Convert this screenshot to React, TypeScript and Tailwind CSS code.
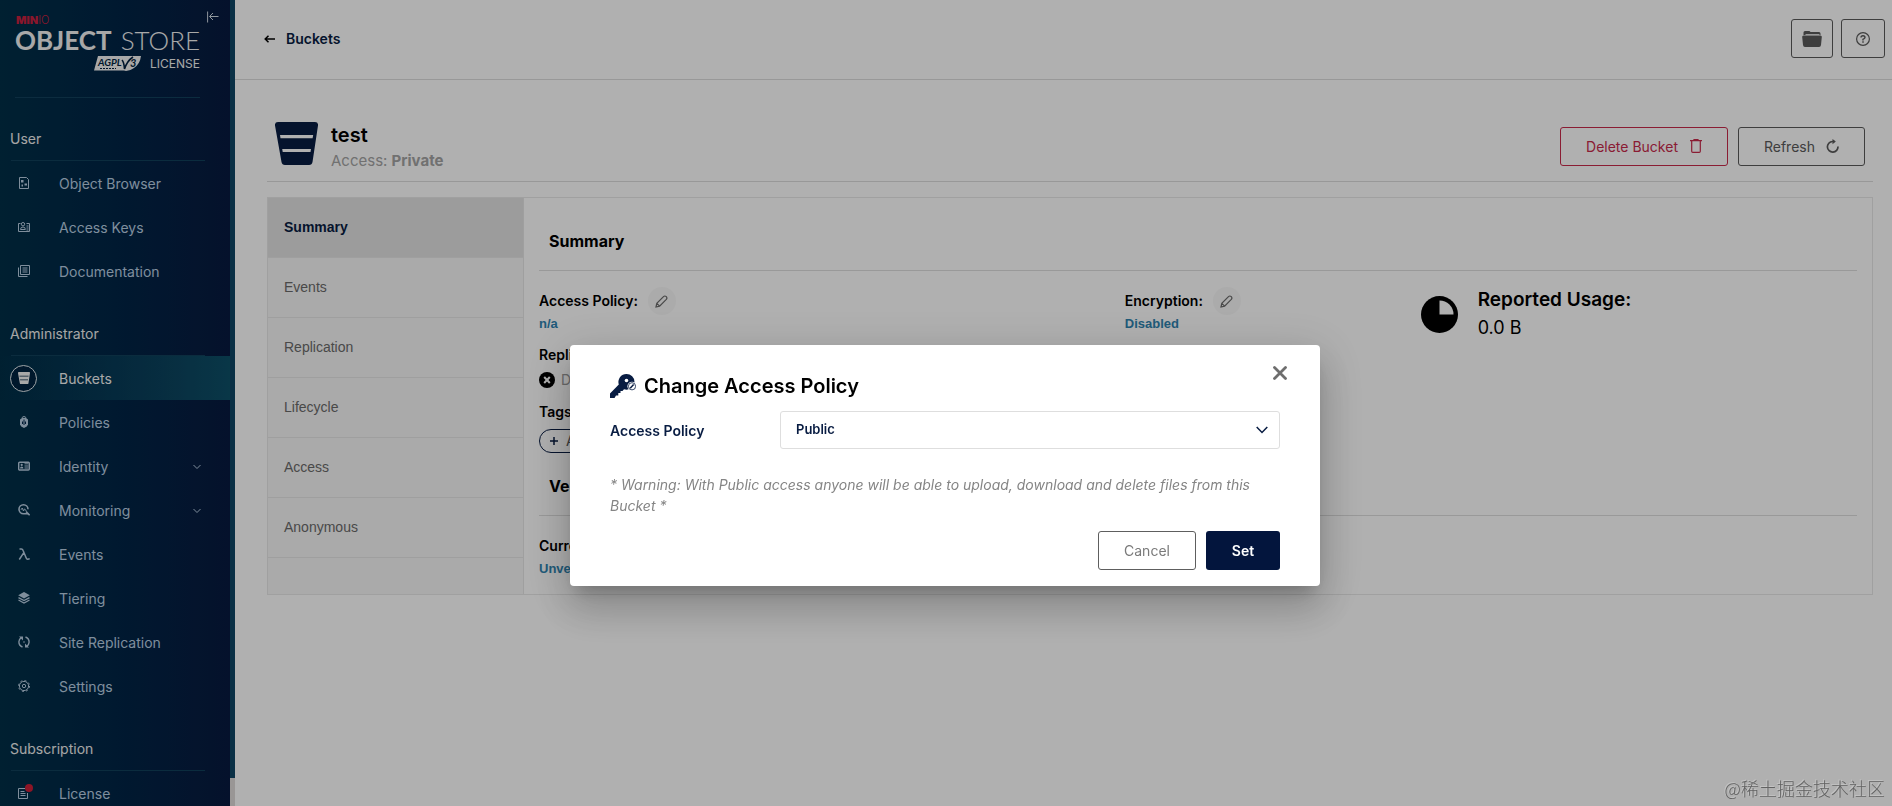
import type { ReactNode } from 'react';
import clsx from 'clsx';

interface NavItem {
  label: string;
  icon: ReactNode;
  active?: boolean;
  expandable?: boolean;
  badge?: boolean;
}

interface NavGroup {
  title: string;
  items: NavItem[];
}

const Glyph = ({ children }: { children: ReactNode }) => (
  <svg viewBox="0 0 12 12" className="size-3" fill="none" stroke="currentColor" aria-hidden="true">
    {children}
  </svg>
);

const BucketGlyph = () => (
  <svg viewBox="0 0 43 43" className="size-full" fill="currentColor" aria-hidden="true">
    <path
      fillRule="evenodd"
      d="M3 0H40Q43.400 0 43 3.500L37.500 40Q37 43 34 43H10Q7 43 6.500 40L0 3.500Q-.4 0 3 0ZM5 13L5.500 16.300H37.600L38.200 13ZM7.200 27L7.700 30H35.500L36 27Z"
    />
  </svg>
);

const NAV: NavGroup[] = [
  {
    title: 'User',
    items: [
      {
        label: 'Object Browser',
        icon: (
          <Glyph>
            <path d="M1.500 .5H8.500L10.500 2.500V11.500H1.500Z" />
            <path d="M3 3h2.500v2.500H3zM3.500 7.500h1.500v2H3.500zM6.500 6.500h2.500v2H6.500z" fill="currentColor" stroke="none" />
          </Glyph>
        ),
      },
      {
        label: 'Access Keys',
        icon: (
          <Glyph>
            <path d="M2.500 2.500H.5V10.500H11.500V2.500H8.500" />
            <circle cx="5" cy="3.200" r="1.700" />
            <path d="M2.500 8.500Q2.500 6 5 6T7.300 8.500ZM8.500 5h2M8.500 7h2M8.500 9h2" />
          </Glyph>
        ),
      },
      {
        label: 'Documentation',
        icon: (
          <Glyph>
            <path d="M2.500 .5H11.500V9.500H2.500ZM.5 2.500V11.500H9.500M4.500 3h5M4.500 5h5M4.500 7h5" />
          </Glyph>
        ),
      },
    ],
  },
  {
    title: 'Administrator',
    items: [
      { label: 'Buckets', active: true, icon: <BucketGlyph /> },
      {
        label: 'Policies',
        icon: (
          <Glyph>
            <path d="M4.200 2.200V1.800Q4.200 .6 6 .6T7.800 1.800V2.200" />
            <path d="M2 3.500L4 2H8L10 3.500V8.500Q9.500 10.500 6 12Q2.500 10.500 2 8.500Z" fill="currentColor" stroke="none" />
            <path d="M6 3.500V9M4.500 5.500V8M7.500 5.500V8" stroke="#00264a" />
          </Glyph>
        ),
      },
      {
        label: 'Identity',
        expandable: true,
        icon: (
          <Glyph>
            <rect x=".7" y="2.200" width="10.600" height="7.800" rx="1" strokeWidth="1.400" />
            <path d="M2 8.500Q2 6.500 3.700 6.500T5.400 8.500Z" fill="currentColor" stroke="none" />
            <circle cx="3.700" cy="4.900" r="1.100" fill="currentColor" stroke="none" />
            <path d="M6.500 3.800h4M6.500 6h4M6.500 8h4" />
          </Glyph>
        ),
      },
      {
        label: 'Monitoring',
        expandable: true,
        icon: (
          <Glyph>
            <path d="M10 5.300A4.500 4.500 0 1 0 5.500 9.800H10.500" strokeWidth="1.600" />
            <path d="M8 7.500L11.600 11.300" strokeWidth="1.600" />
            <path d="M3 5.800L4.200 4L5.500 7L6.500 4.800L8.500 7.200" strokeWidth="1" />
          </Glyph>
        ),
      },
      {
        label: 'Events',
        icon: (
          <Glyph>
            <path d="M1.500 1H3.500Q4.500 1 5 2.300L8.200 10Q8.700 11.300 9.700 11.200L11.700 10.800M5.800 4.700L1.300 11.500" strokeWidth="1.500" />
          </Glyph>
        ),
      },
      {
        label: 'Tiering',
        icon: (
          <Glyph>
            <path d="M6 0L11.800 3.200L6 6.400L.2 3.200Z" fill="currentColor" stroke="none" />
            <path d="M.5 5.600L6 8.600L11.500 5.600M.5 8L6 11L11.500 8" strokeWidth="1.300" />
          </Glyph>
        ),
      },
      {
        label: 'Site Replication',
        icon: (
          <Glyph>
            <path d="M4.500 11Q.8 9.500 .9 5.700Q1 3.200 3.300 1.600M7.500 1Q11.200 2.500 11.100 6.300Q11 8.800 8.700 10.400" strokeWidth="1.400" />
            <path d="M1 .5H5V4.500ZM11 11.500H7V7.500Z" fill="currentColor" stroke="none" />
            <circle cx="6" cy="6" r=".8" fill="currentColor" stroke="none" />
          </Glyph>
        ),
      },
      {
        label: 'Settings',
        icon: (
          <Glyph>
            <circle cx="6" cy="6" r="4.600" />
            <circle cx="6" cy="6" r="1.700" />
            <circle cx="6" cy="6" r="5.500" strokeDasharray="2 2.300" />
          </Glyph>
        ),
      },
    ],
  },
  {
    title: 'Subscription',
    items: [
      {
        label: 'License',
        badge: true,
        icon: (
          <Glyph>
            <path d="M7 1.500H.5V11.500H9.500V6M2.500 4.500h4M2.500 6.500h5M2.500 8.500h5" />
          </Glyph>
        ),
      },
    ],
  },
];

const TABS = ['Summary', 'Events', 'Replication', 'Lifecycle', 'Access', 'Anonymous'];

const Logo = () => (
  <div className="ml-[15px] h-[98px] w-[185px] border-b border-[#12405c] pt-3.5 font-[Lato,sans-serif] text-[#f4f4f4]">
    <div className="pl-px font-[Inter,sans-serif] text-[11px] leading-3 font-black text-[#c8203f]">
      MIN<span className="font-light">IO</span>
    </div>
    <div className="flex justify-between text-[26px] leading-[28px] whitespace-nowrap">
      <span className="font-bold">OBJECT</span>
      <span className="font-light">STORE</span>
    </div>
    <div className="mt-0.5 flex h-4 items-center justify-end gap-2">
      <svg viewBox="0 0 48 16" className="h-4 w-12" role="img" aria-label="AGPLv3">
        <path d="M4 0H47Q46 8 40 12Q36 15 32 15L30 14.500H0Z" fill="#f4f4f4" />
        <text x="4" y="10" fontSize="10" fontStyle="italic" fontWeight="700" fontFamily="Lato, sans-serif" fill="#001f40">
          AGPL
        </text>
        <path d="M28 4Q30 6 30.500 13Q33 5 39 1" fill="none" stroke="#001f40" strokeWidth="1.600" />
        <text x="36" y="11" fontSize="11" fontStyle="italic" fontWeight="700" fontFamily="Lato, sans-serif" fill="#001f40">
          3
        </text>
        <path d="M6 12.500H22" stroke="#001f40" strokeDasharray="2 1" />
      </svg>
      <span className="font-[Inter,sans-serif] text-[12px]">LICENSE</span>
    </div>
  </div>
);

const NavLink = ({ item }: { item: NavItem }) => (
  <a
    href="#"
    className={clsx(
      'flex h-11 items-center pr-[26px] pl-2.5 text-sm',
      item.active ? 'bg-linear-to-r from-transparent to-[#0e5068] text-[#f4f4f4]' : 'text-[#b9cee2]',
    )}
  >
    <span
      className={clsx(
        'relative flex size-[27px] shrink-0 items-center justify-center rounded-full',
        item.active && 'border border-[#e6eef2] bg-[#002440]',
      )}
    >
      {item.active ? <span className="size-3">{item.icon}</span> : item.icon}
      {item.badge && <span className="absolute top-1 right-1 size-2 rounded-full bg-[#cc1f38]" />}
    </span>
    <span className="ml-[22px] grow pt-0.5">{item.label}</span>
    {item.expandable && (
      <svg viewBox="0 0 14 14" className="mt-0.5 size-3.5" fill="none" stroke="currentColor" aria-hidden="true">
        <path d="M3.500 5L7 8.500L10.500 5" />
      </svg>
    )}
  </a>
);

const Sidebar = () => (
  <aside className="flex h-screen shrink-0 overflow-hidden">
    <div className="relative w-[230px] bg-linear-to-r from-[#002f48] via-[#002546] to-[#081a40]">
      <button type="button" aria-label="Collapse menu" className="absolute top-[11px] left-[207px] text-[#cfd9e2]">
        <svg viewBox="0 0 12 12" className="size-3" fill="none" stroke="currentColor">
          <path d="M.6 .5V11.500M11.500 5.500H2.800M6 2L2.500 5.500L6 9" />
        </svg>
      </button>
      <Logo />
      <nav>
        {NAV.map((group) => (
          <section key={group.title}>
            <div className="ml-[11px] w-[194px] border-b border-[#10405a] pt-[31px] pb-[11px]">
              <h2 className="-ml-px text-sm leading-5 text-[#f0f0f0]">{group.title}</h2>
            </div>
            {group.items.map((item) => (
              <NavLink key={item.label} item={item} />
            ))}
          </section>
        ))}
      </nav>
    </div>
    <div className="w-[5px] bg-[#dedad8]">
      <div className="h-[778px] bg-[#0f4665]" />
    </div>
  </aside>
);

const EditButton = ({ label }: { label: string }) => (
  <button
    type="button"
    aria-label={label}
    className="flex size-7 items-center justify-center rounded-full bg-[#f8f8f8] text-[#6a6a6a]"
  >
    <svg viewBox="0 0 13 13" className="size-[13px]" fill="none" stroke="currentColor" strokeWidth="1.200">
      <path d="M1 12L1.800 8.300L8.500 1.600Q9.800 .4 11.300 1.600Q12.500 3 11.300 4.400L4.600 11.200ZM1.800 8.300L4.600 11.200" />
    </svg>
  </button>
);

const SectionTitle = ({ children }: { children: ReactNode }) => (
  <h3 className="border-b border-[#dedede] pb-[17px] pl-2.5 text-base leading-6 font-bold text-black">{children}</h3>
);

const ValueLink = ({ children }: { children: ReactNode }) => (
  <a
    href="#"
    className="block font-['Liberation_Sans',Arial,sans-serif] text-[13px] leading-[18px] font-bold text-[#2f83b0]"
  >
    {children}
  </a>
);

const Summary = () => (
  <div className="grow px-[15px] pt-[31px] pb-4 text-sm text-black">
    <SectionTitle>Summary</SectionTitle>
    <div className="grid grid-cols-[2fr_1fr] pt-4">
      <div className="grid grid-cols-[2fr_1fr]">
        <div>
          <div className="flex h-7 items-center gap-2.5 font-semibold">
            Access Policy: <EditButton label="Edit access policy" />
          </div>
          <ValueLink>n/a</ValueLink>
          <div className="mt-3 leading-5 font-semibold">Replication:</div>
          <div className="mt-[3px] flex h-6 items-center gap-1.5 text-[#9a9a9a]">
            <svg viewBox="0 0 16 16" className="size-4" aria-hidden="true">
              <circle cx="8" cy="8" r="8" fill="#000" />
              <path d="M5.200 5L10.800 11M10.800 5L5.200 11" stroke="#fff" strokeWidth="2" />
            </svg>
            Disabled
          </div>
          <div className="mt-2.5 leading-5 font-semibold">Tags:</div>
          <button
            type="button"
            className="mt-[7px] flex h-6 items-center gap-2 rounded-full border border-[#081c42] px-2.5 text-[#5a5a5a]"
          >
            <svg viewBox="0 0 8 8" className="size-2" stroke="#081c42" strokeWidth="1.500" aria-hidden="true">
              <path d="M4 0V8M0 4H8" />
            </svg>
            Add tag
          </button>
        </div>
        <div>
          <div className="flex h-7 items-center gap-2.5 font-semibold">
            Encryption: <EditButton label="Edit encryption" />
          </div>
          <ValueLink>Disabled</ValueLink>
        </div>
      </div>
      <div className="flex gap-5 pl-[3px]">
        <svg viewBox="0 0 37 37" className="mt-[9px] size-[37px]" aria-hidden="true">
          <circle cx="18.500" cy="18.500" r="18.500" />
          <path d="M18.500 4.500A14 14 0 0 1 32.500 18.500H18.500Z" fill="#fff" />
        </svg>
        <div className="text-[19px] leading-7">
          <div className="-mt-px font-semibold">Reported Usage:</div>
          <div className="text-lg leading-7">0.0 B</div>
        </div>
      </div>
    </div>
    <div className="pt-[21px]">
      <SectionTitle>Versioning</SectionTitle>
    </div>
    <div className="mt-5 mb-1 leading-5 font-semibold">Current Status:</div>
    <ValueLink>Unversioned (Default)</ValueLink>
  </div>
);

const AccessPolicyDialog = () => (
  <div className="fixed inset-0 flex items-start justify-center bg-black/31 pt-[345px] pr-0.5">
    <div
      role="dialog"
      aria-modal="true"
      aria-labelledby="dialog-title"
      className="relative w-[750px] rounded bg-white px-10 pt-[26px] pb-4 shadow-[0_11px_15px_-7px_rgba(0,0,0,0.2),0_24px_38px_3px_rgba(0,0,0,0.14),0_9px_46px_8px_rgba(0,0,0,0.12)]"
    >
      <button type="button" aria-label="Close" className="absolute top-[21px] right-[33px] text-[#6e6e6e]">
        <svg viewBox="0 0 14 14" className="size-3.5" stroke="currentColor" strokeWidth="2.800" strokeLinecap="round">
          <path d="M1.500 1.500L12.500 12.500M12.500 1.500L1.500 12.500" />
        </svg>
      </button>
      <div className="flex items-center gap-2">
        <svg viewBox="0 0 26 24" className="h-6 w-[26px]" fill="#081c42" aria-hidden="true">
          <path d="M16.500 0A8 8 0 0 1 24.500 8A8 8 0 0 1 14 15.300L12.500 17H10.500V19H8.300V21.500H6L4.500 24H0V19.500L8.800 10.500A8 8 0 0 1 16.500 0Z" />
          <circle cx="16.500" cy="6.500" r="1.800" fill="#fff" />
          <circle cx="22" cy="12.300" r="4.600" fill="#fff" />
          <circle cx="22" cy="12.300" r="3.600" fill="none" stroke="#081c42" strokeWidth=".8" />
          <path d="M20.200 14.200L23.600 10.600" stroke="#081c42" strokeWidth="1.500" />
        </svg>
        <h2 id="dialog-title" className="text-xl leading-[30px] font-semibold text-black">
          Change Access Policy
        </h2>
      </div>
      <div className="mt-2.5 flex items-center text-[#081c42]">
        <label htmlFor="policy" className="w-[170px] pt-0.5 text-sm font-semibold">
          Access Policy
        </label>
        <div className="relative grow">
          <select
            id="policy"
            defaultValue="Public"
            className="h-[38px] w-full appearance-none rounded-[3px] border border-[#dedede] bg-white pr-10 pl-[15px] text-[13px] font-semibold"
          >
            <option>Private</option>
            <option>Public</option>
            <option>Custom</option>
          </select>
          <svg
            viewBox="0 0 12 8"
            className="pointer-events-none absolute top-[15px] right-3 h-2 w-3"
            fill="none"
            stroke="currentColor"
            strokeWidth="1.500"
          >
            <path d="M.7 1L6 6.500L11.300 1" />
          </svg>
        </div>
      </div>
      <p className="mt-[25px] text-sm leading-[21px] text-[#858585] italic">
        * Warning: With Public access anyone will be able to upload, download and delete files from this Bucket *
      </p>
      <div className="mt-[15px] flex justify-end gap-2.5 text-sm">
        <button type="button" className="h-[39px] w-[98px] rounded-[3px] border border-[#5e5e5e] text-[#7a7a7a]">
          Cancel
        </button>
        <button type="button" className="h-[39px] w-[74px] rounded-[3px] bg-[#03153d] font-semibold text-white">
          Set
        </button>
      </div>
    </div>
  </div>
);

const App = () => {
  return (
    <div className="flex h-screen overflow-hidden bg-white font-[Inter,sans-serif]">
      <Sidebar />
      <main className="min-w-0 grow">
        <header className="flex h-20 items-center justify-between border-b border-[#dcdcdc] pr-[7px] pb-0.5 pl-[29px]">
          <a href="#" className="flex items-center gap-[11px] text-sm font-semibold text-[#081c42]">
            <svg viewBox="0 0 11 8" className="h-2 w-[11px]" fill="none" stroke="#000" strokeWidth="1.500" aria-hidden="true">
              <path d="M11 4H1.500M4.500 .7L1.200 4L4.500 7.300" />
            </svg>
            Buckets
          </a>
          <div className="flex gap-2 text-[#5a5a5a]">
            <button
              type="button"
              aria-label="Object manager"
              className="flex h-[39px] w-[42px] items-center justify-center rounded-[3px] border border-current"
            >
              <svg viewBox="0 0 20 16" className="h-4 w-5" fill="currentColor">
                <path d="M1.500 4V1.500Q1.500 0 3 0H7Q8 0 8.500 1H17Q18.500 1 18.500 2.500V4Z" />
                <path d="M1.500 4.500H18.500Q20 4.500 19.800 6L19 14Q18.800 16 17 16H3Q1.200 16 1 14L.2 6Q0 4.500 1.500 4.500Z" />
                <path d="M3.500 3.600H17.500" stroke="#fff" strokeWidth=".9" />
              </svg>
            </button>
            <button
              type="button"
              aria-label="Help"
              className="flex h-[39px] w-11 items-center justify-center rounded-[3px] border border-current"
            >
              <svg viewBox="0 0 14 14" className="size-3.5" fill="none" stroke="currentColor">
                <circle cx="7" cy="7" r="6.400" strokeWidth="1.200" />
                <path d="M5 5.500Q5 3.700 7 3.700T9 5.500Q9 6.500 7 7.300V8.500" strokeWidth="1.400" />
                <path d="M7 9.300V10.800" strokeWidth="1.500" />
              </svg>
            </button>
          </div>
        </header>
        <div className="pr-[19px] pl-8">
          <div className="mt-[42px] flex items-center border-b border-[#dcdcdc] px-2 pb-[9px]">
            <span className="size-[43px] self-start text-[#081c42]">
              <BucketGlyph />
            </span>
            <div className="ml-[13px] grow">
              <h1 className="text-xl leading-[26px] font-semibold text-black">test</h1>
              <div className="pt-px text-[15px] leading-[23px] text-[#a4a4a4]">
                Access: <b className="font-bold">Private</b>
              </div>
            </div>
            <div className="mb-0.5 flex gap-2.5 text-sm">
              <button
                type="button"
                className="flex h-[39px] items-center gap-3 rounded-[3px] border border-current px-[25px] text-[#c8294b]"
              >
                <span className="pt-0.5">Delete Bucket</span>
                <svg viewBox="0 0 12 14" className="h-3.5 w-3" fill="none" stroke="currentColor" strokeWidth="1.200">
                  <path d="M0 1.700H12M4 1.500V.6H8V1.500M1.700 1.700V12.200Q1.700 13.400 2.800 13.400H9.200Q10.300 13.400 10.300 12.200V1.700" />
                </svg>
              </button>
              <button
                type="button"
                className="flex h-[39px] items-center gap-[11px] rounded-[3px] border border-current px-[25px] text-[#5a5a5a]"
              >
                <span className="pt-0.5">Refresh</span>
                <svg viewBox="0 0 13 14" className="h-3.5 w-[13px]" fill="none" stroke="currentColor" strokeWidth="1.700">
                  <path d="M12 7.500A5.300 5.300 0 1 1 6.500 2.500H8.500" />
                  <path d="M6.500 0L9.800 2.500L6.500 5.200Z" fill="currentColor" stroke="none" />
                </svg>
              </button>
            </div>
          </div>
          <div className="mt-[15px] flex border border-[#e8e8e8]">
            <div
              role="tablist"
              className="w-64 shrink-0 border-r border-[#e6e6e6] bg-[#f6f6f6] font-['Liberation_Sans',Arial,sans-serif] text-sm"
            >
              {TABS.map((tab, i) => (
                <button
                  key={tab}
                  type="button"
                  role="tab"
                  aria-selected={i === 0}
                  className={clsx(
                    'block h-[60px] w-full border-b border-[#e6e6e6] pb-0.5 pl-4 text-left',
                    i === 0 ? 'bg-[#e3e3e3] font-bold text-[#081c42]' : 'text-[#6a6a6a]',
                  )}
                >
                  {tab}
                </button>
              ))}
            </div>
            <Summary />
          </div>
        </div>
      </main>
      <AccessPolicyDialog />
      <div className="fixed right-[7px] bottom-1 font-['Noto_Sans_CJK_SC',sans-serif] text-lg leading-7 font-light text-[#626262] [text-shadow:-1px_-1px_0_#c4c4c4]">
        @稀土掘金技术社区
      </div>
    </div>
  );
};

export default App;
